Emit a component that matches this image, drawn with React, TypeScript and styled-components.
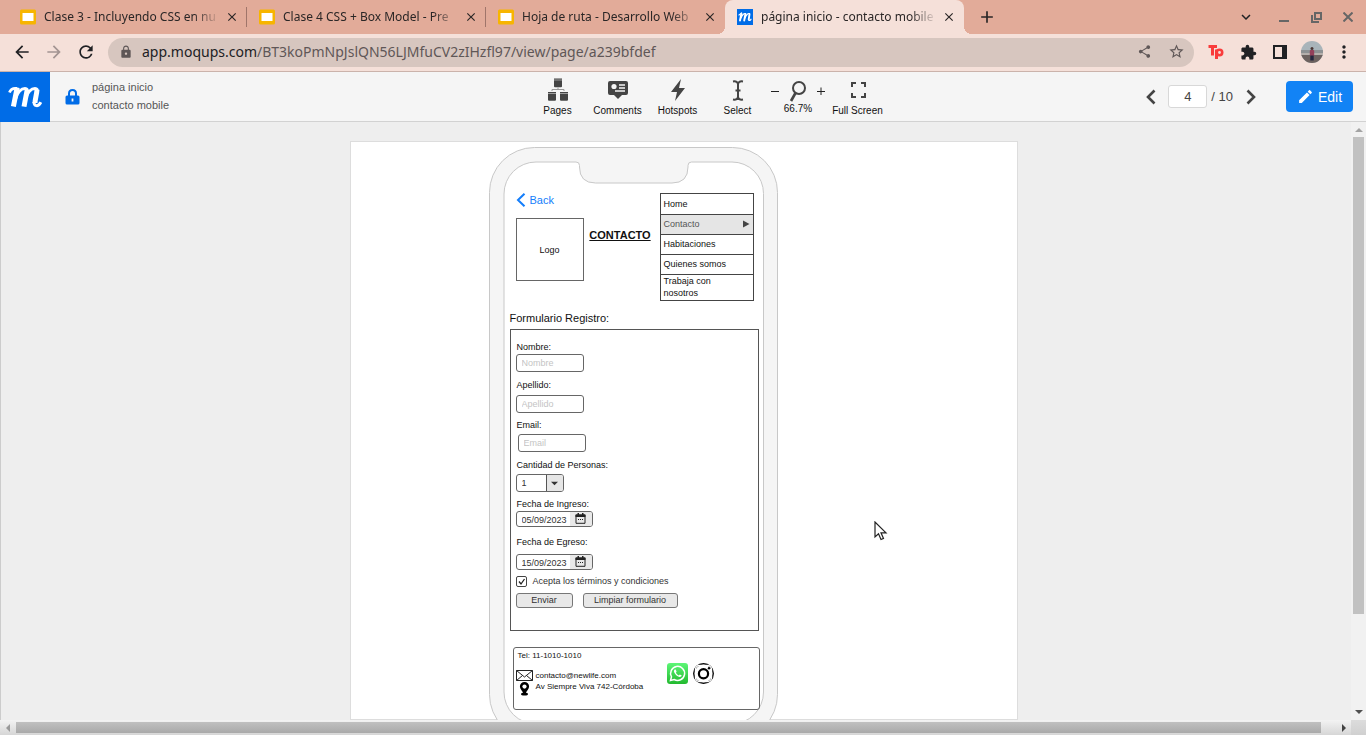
import React from "react";
import styled, { createGlobalStyle, css } from "styled-components";
import {
  MdAdd,
  MdArrowBack,
  MdArrowForward,
  MdClose,
  MdEdit,
  MdExtension,
  MdKeyboardArrowDown,
  MdLock,
  MdMoreVert,
  MdRefresh,
  MdShare,
  MdStarBorder,
} from "react-icons/md";

const GlobalStyle = createGlobalStyle`
  *, *::before, *::after { box-sizing: border-box; }
  body {
    margin: 0;
    overflow: hidden;
    font-family: "Liberation Sans", Arial, sans-serif;
    color: #222;
  }
  button, input, select { font: inherit; color: inherit; margin: 0; }
  svg { display: block; flex: none; }
`;

const Shell = styled.div`
  display: flex;
  flex-direction: column;
  height: 100vh;
`;

const plainButton = css`
  display: flex;
  align-items: center;
  justify-content: center;
  padding: 0;
  border: 0;
  background: none;
`;

/* ---------- Browser tabs ---------- */

const TabStrip = styled.div`
  display: flex;
  flex: none;
  height: 34px;
  padding-left: 8px;
  background: #e2ab99;
  font-family: "Noto Sans", sans-serif;
  color: #2a2626;
`;

const Tab = styled.div<{ $active?: boolean; $divider?: boolean }>`
  position: relative;
  display: flex;
  align-items: center;
  width: 239px;
  padding: 0 7px 0 12px;
  border-radius: 8px 8px 0 0;
  background: ${(p) => (p.$active ? "#f5e0d9" : "transparent")};

  ${(p) =>
    p.$divider &&
    css`
      &::after {
        content: "";
        position: absolute;
        right: 0;
        top: 7px;
        width: 1px;
        height: 20px;
        background: #a0756a;
      }
    `}

  ${(p) =>
    p.$active &&
    css`
      &::before,
      &::after {
        content: "";
        position: absolute;
        bottom: 0;
        width: 8px;
        height: 8px;
      }
      &::before {
        right: 100%;
        background: radial-gradient(circle at 0 0, transparent 8px, #f5e0d9 8px);
      }
      &::after {
        left: 100%;
        background: radial-gradient(circle at 100% 0, transparent 8px, #f5e0d9 8px);
      }
    `}
`;

const TabTitle = styled.span`
  flex: 1;
  min-width: 0;
  margin: 0 4px 0 8px;
  white-space: nowrap;
  font-size: 12px;
  line-height: 20px;
  mask-image: linear-gradient(to right, #000 85%, transparent 100%);
`;

const TabClose = styled.button`
  ${plainButton}
  width: 16px;
  height: 16px;
  stroke: currentColor;
`;

const NewTab = styled.button`
  ${plainButton}
  width: 28px;
  margin-left: 9px;
`;

const WindowControls = styled.div`
  display: flex;
  align-items: center;
  margin-left: auto;
  padding-right: 2px;
  color: #666;
`;

const WindowButton = styled.button<{ $width: number }>`
  ${plainButton}
  width: ${(p) => p.$width}px;
  height: 34px;
`;

/* ---------- Browser toolbar ---------- */

const Toolbar = styled.div`
  display: flex;
  flex: none;
  align-items: center;
  height: 38px;
  padding: 0 6px;
  border-bottom: 1px solid #cbb3ab;
  background: #f5e0d9;
  color: #202124;
`;

const ToolButton = styled.button<{ $color?: string }>`
  ${plainButton}
  width: 32px;
  height: 29px;
  padding-bottom: 1px;
  color: ${(p) => p.$color ?? "#202124"};
`;

const AddressBar = styled.div`
  display: flex;
  flex: 1;
  align-items: center;
  height: 29px;
  margin: 0 6px;
  padding: 0 2px 1px 11px;
  border-radius: 15px;
  background: #d7c6bf;
  color: #5f5757;
`;

const Url = styled.span`
  flex: 1;
  margin-left: 9px;
  font-family: "Noto Sans", sans-serif;
  font-size: 14px;
  line-height: 20px;
  white-space: nowrap;

  b {
    font-weight: 400;
    color: #202124;
  }
`;

/* ---------- Application header ---------- */

const AppHeader = styled.header`
  display: grid;
  flex: none;
  grid-template-columns: 50px 1fr 360px 1fr;
  grid-template-rows: 49px;
  height: 50px;
  border-bottom: 1px solid #d2d2d2;
  background: #f5f5f5;
`;

const LogoLink = styled.a`
  display: grid;
  place-items: center;
  height: 50px;
  background: #006ce7;
`;

const Project = styled.div`
  display: flex;
  align-items: center;
  gap: 12px;
  padding-left: 15px;
`;

const ProjectNames = styled.div`
  padding-bottom: 1px;
  font-size: 11px;
  line-height: 18px;
  color: #555;
`;

const Tools = styled.nav`
  display: grid;
  grid-template-columns: repeat(6, 60px);
`;

const toolText = css`
  font-size: 10px;
  line-height: 12px;
  color: #111;
  white-space: nowrap;
`;

const Tool = styled.button`
  ${plainButton}
  ${toolText}
  flex-direction: column;
  justify-content: flex-start;
  gap: 3px;
  padding: 6px 1px 0 0;
  svg { color: #444; }
`;

const ZoomTool = styled.div`
  ${toolText}
  display: grid;
  grid-template-columns: 14px 32px 14px;
  grid-template-rows: 25px 12px;
  align-content: start;
  justify-items: center;
  align-items: center;
  padding: 6px 1px 0 0;

  output { grid-column: 1 / -1; }
`;

const ZoomButton = styled.button`
  ${plainButton}
  width: 14px;
  height: 14px;
`;

const HeaderRight = styled.div`
  display: flex;
  align-items: center;
  justify-content: flex-end;
  padding-right: 13px;
  font-size: 13px;
  color: #444;
`;

const PageInput = styled.input`
  width: 39px;
  height: 23px;
  margin: 0 4px 0 7px;
  padding: 0;
  border: 1px solid #d8d8d8;
  border-radius: 3px;
  background: #fff;
  text-align: center;
`;

const StepButton = styled.button`
  ${plainButton}
  width: 20px;
  height: 24px;
`;

const NextButton = styled(StepButton)`
  margin: 0 25px 0 8px;
`;

const EditButton = styled.button`
  ${plainButton}
  gap: 4px;
  width: 67px;
  height: 31px;
  border-radius: 4px;
  background: #1283f5;
  color: #fff;
  font-size: 14px;
`;

/* ---------- Workspace and scroll bars ---------- */

const Workspace = styled.div`
  display: grid;
  flex: 1;
  grid-template-columns: 1fr 15px;
  grid-template-rows: minmax(0, 1fr) 15px;
  min-height: 0;
`;

const Canvas = styled.main`
  overflow: hidden;
  padding: 19px 0 0 15px;
  border-left: 1px solid #ccc;
  background: #eee;
`;

const Sheet = styled.div`
  width: 668px;
  min-height: 100%;
  margin: 0 auto;
  padding: 4px 0 0 138px;
  border: 1px solid #ddd;
  background: #fff;
`;

const VerticalBar = styled.div`
  display: flex;
  flex-direction: column;
  align-items: center;
  justify-content: space-between;
  padding-bottom: 4px;
  background: #f1f1f1;
`;

const VerticalThumb = styled.div`
  flex: none;
  width: 11px;
  height: calc(100% - 117px);
  margin-bottom: auto;
  background: #c1c1c1;
`;

const ArrowSlot = styled.div`
  display: grid;
  place-items: center;
  width: 15px;
  height: 15px;
`;

const HorizontalBar = styled.div`
  display: flex;
  align-items: center;
  background: linear-gradient(#f3f3f3, #d6d6d6);
`;

const HorizontalThumb = styled.div`
  flex: 1;
  height: 11px;
  margin: 0 15px 0 1px;
  background: linear-gradient(#c0c0c0, #a9a9a9);
`;

const BarCorner = styled.div`
  background: linear-gradient(#dcdcdc, #d0d0d0);
`;

const Pointer = styled.svg`
  position: fixed;
  left: 874px;
  top: 521px;
`;

/* ---------- Phone mock-up ---------- */

const Phone = styled.div`
  position: relative;
  width: 290px;
  padding: 47px 20px 0 21px;
  color: #111;
  font-size: 9px;
  line-height: 12px;
`;

const PhoneFrame = styled.svg`
  position: absolute;
  left: 0;
  top: 0;
`;

const Screen = styled.div`
  position: relative;
  display: flex;
  flex-direction: column;
`;

const ScreenHeader = styled.div`
  display: grid;
  grid-template-columns: 68px 1fr 94px;
  align-items: start;
  padding: 0 5px 0 6px;
`;

const BackLink = styled.a`
  display: flex;
  align-items: center;
  gap: 4px;
  height: 14px;
  margin-bottom: 11px;
  color: #147efb;
  font-size: 11px;
  text-decoration: none;
`;

const LogoBox = styled.div`
  display: grid;
  place-items: center;
  height: 63px;
  border: 1px solid #666;
`;

const ScreenTitle = styled.h1`
  margin: 35px 3px 0 0;
  font-size: 11px;
  line-height: 14px;
  text-align: center;
  text-decoration: underline;
  text-underline-offset: 1px;
`;

const Menu = styled.ul`
  margin: 0;
  padding: 0;
  border: 1px solid #444;
  list-style: none;
`;

const MenuItem = styled.li<{ $active?: boolean }>`
  display: flex;
  align-items: center;
  height: 20px;
  padding: 0 3px 1px 3px;
  background: ${(p) => (p.$active ? "#e5e5e5" : "transparent")};

  & + & { border-top: 1px solid #444; }

  a {
    flex: 1;
    color: ${(p) => (p.$active ? "#555" : "#111")};
    text-decoration: none;
  }

  &:last-child {
    height: 26px;
    padding-right: 24px;
  }
`;

const FormTitle = styled.h2`
  margin: 10px 0 4px;
  font-size: 11px;
  font-weight: 400;
  line-height: 14px;
`;

const Form = styled.form`
  height: 302px;
  padding: 11px 6px 0 5px;
  border: 1px solid #555;
`;

const Field = styled.div<{ $before?: number; $gap: number }>`
  display: flex;
  flex-direction: column;
  align-items: flex-start;
  gap: ${(p) => p.$gap}px;
  margin-top: ${(p) => p.$before ?? 0}px;

  label { padding-left: 1px; }
`;

const control = css`
  border: 1px solid #666;
  border-radius: 3px;
  background: #fff;
`;

const TextInput = styled.input<{ $indent?: boolean }>`
  ${control}
  width: 68px;
  height: 18px;
  margin-left: ${(p) => (p.$indent ? 2 : 0)}px;
  padding: 0 5px;

  &::placeholder { color: #c4c4c4; opacity: 1; }
`;

const Combo = styled.div<{ $date?: boolean }>`
  ${control}
  display: flex;
  width: ${(p) => (p.$date ? 77 : 48)}px;
  height: ${(p) => (p.$date ? 16 : 18)}px;
  overflow: hidden;
  color: #333;

  input,
  select {
    flex: 1;
    min-width: 0;
    width: 0;
    padding: ${(p) => (p.$date ? "2px 0 0 5px" : "0 0 0 5px")};
    border: 0;
    appearance: none;
    background: none;
  }
`;

const ComboEnd = styled.span`
  display: grid;
  place-items: center;
  width: 17px;
  border-left: 1px solid #555;
  background: #e6e6e6;
`;

const CalendarButton = styled.button`
  ${plainButton}
  justify-content: flex-start;
  width: 22px;
  padding: 0 0 1px 5px;
  background: #e9e9e9;
  color: #222;
`;

const Terms = styled.label`
  display: flex;
  align-items: center;
  gap: 6px;
  margin-top: 5px;
  color: #333;
`;

const TickBox = styled.span`
  position: relative;
  width: 11px;
  height: 11px;

  input {
    display: block;
    width: 11px;
    height: 11px;
    border: 1px solid #444;
    border-radius: 2px;
    appearance: none;
    background: #fff;
  }

  svg {
    position: absolute;
    inset: 0;
    pointer-events: none;
  }
`;

const Actions = styled.div`
  display: flex;
  gap: 10px;
  margin-top: 6px;
`;

const ActionButton = styled.button<{ $width: number }>`
  ${plainButton}
  width: ${(p) => p.$width}px;
  height: 15px;
  padding-bottom: 1px;
  border: 1px solid #777;
  border-radius: 3px;
  background: #e8e8e8;
  color: #333;
`;

const ContactBox = styled.footer`
  display: flex;
  justify-content: space-between;
  width: 247px;
  height: 63px;
  margin: 16px 0 0 3px;
  padding: 2px 45px 0 2px;
  border: 1px solid #666;
  border-radius: 3px;
  font-size: 8px;
  line-height: 11px;
`;

const ContactList = styled.address`
  font-style: normal;
  white-space: nowrap;
`;

const Telephone = styled.p`
  margin: 0 0 9px 2px;
`;

const ContactRow = styled.div`
  display: grid;
  grid-template-columns: 17px auto;
  align-items: center;
  justify-items: start;
  column-gap: 3px;
`;

const PlaceRow = styled(ContactRow)`
  align-items: start;

  svg { margin: 1px 0 0 3px; }
`;

const Social = styled.div`
  display: flex;
  gap: 5px;
  margin-top: 13px;
`;

/* ---------- Drawings ---------- */

const SlidesIcon = () => (
  <svg width="16" height="16" viewBox="0 0 16 16">
    <rect y="0.5" width="16" height="15" rx="1.5" fill="#f7b500" />
    <rect x="2.5" y="4" width="11" height="8" fill="#fff" />
  </svg>
);

const ScriptM = () => (
  <svg width="34" height="24" viewBox="0 0 34 24">
    <g fill="none" stroke="#fff" strokeLinejoin="round">
      <path d="M1.500 7.500C2.500 4.300 5 3 9 3.400" strokeWidth="2.800" />
      <path d="M9.200 2.400L5.400 21.600M19.200 4.600L16 21.600M29 4.600C28.800 9 27 14 27 18" strokeWidth="5" />
      <path d="M7.500 14C9.500 7 13.500 3.400 17 3.400C19 3.400 19.500 4.500 19.200 7M17.500 14C19.500 7 23.500 3.400 27 3.400C29 3.400 29.500 4.500 29.200 7" strokeWidth="3" />
      <path d="M26 17C25.800 21.800 30.500 21.800 32.800 17.200" strokeWidth="3" />
    </g>
  </svg>
);

const MoqupsFavicon = () => (
  <svg width="16" height="16" viewBox="0 0 16 16">
    <rect width="16" height="16" fill="#006ce7" />
    <g fill="none" stroke="#fff" strokeLinecap="round">
      <path d="M4.400 4.500L3 11.500M8.400 5L7.200 11.500M12.500 5.200L11.700 10.500" strokeWidth="1.900" />
      <path d="M2 6L4.500 4.200M4 9C5 6 7 4 8.500 4.600M8 9C9 6 11 4 12.500 4.600M11.700 10.500C11.800 12 13.200 11.800 14 10.200" strokeWidth="1.200" />
    </g>
  </svg>
);

const RestoreIcon = () => (
  <svg width="11" height="11" viewBox="0 0 11 11" fill="none" stroke="#666" strokeWidth="2">
    <path d="M4 1H10V7H4Z" />
    <path d="M1 3V10H8" />
  </svg>
);

const TpIcon = () => (
  <svg width="18" height="16" viewBox="0 0 18 16" fill="none" stroke="#f93c3c" strokeWidth="3">
    <path d="M1.500 2.500H10M5.500 2.500V11.500" />
    <path d="M9.500 5.500V15" />
    <circle cx="12.500" cy="8.500" r="2.700" strokeWidth="2.600" />
  </svg>
);

const SidePanelIcon = () => (
  <svg width="14" height="14" viewBox="0 0 14 14">
    <path d="M0 0H14V14H0Z" fill="#202124" />
    <path d="M2 2H9V12H2Z" fill="#f5e0d9" />
  </svg>
);

const Avatar = () => (
  <svg width="22" height="22" viewBox="0 0 22 22">
    <defs>
      <clipPath id="avatar-clip">
        <circle cx="11" cy="11" r="11" />
      </clipPath>
    </defs>
    <g clipPath="url(#avatar-clip)">
      <rect width="22" height="22" fill="#a9b4ba" />
      <rect y="9" width="22" height="3" fill="#8d9193" />
      <rect y="12" width="22" height="3" fill="#b5afab" />
      <rect y="14" width="22" height="8" fill="#6d625f" />
      <circle cx="11" cy="7.500" r="1.500" fill="#4b3533" />
      <rect x="8.800" y="9" width="4.400" height="6" rx="1" fill="#93405a" />
      <rect x="9.300" y="14.500" width="3.400" height="5" fill="#26263f" />
    </g>
  </svg>
);

const ProjectLock = () => (
  <svg width="15" height="16" viewBox="0 0 15 16">
    <path d="M4 7V4.500C4 2.300 5.500 1 7.500 1S11 2.300 11 4.500V7" fill="none" stroke="#006ce7" strokeWidth="2" />
    <rect x="0.500" y="6.500" width="14" height="9" rx="1.500" fill="#006ce7" />
    <path d="M7.500 9.500V12.500" stroke="#f5f5f5" strokeWidth="1.800" />
  </svg>
);

const PagesIcon = () => (
  <svg width="24" height="24" viewBox="0 0 24 24" fill="currentColor">
    <path d="M8 0.500h8v1.200H8zM8 2.200h8v6a1 1 0 0 1-1 1H9a1 1 0 0 1-1-1z" />
    <path d="M2 14h8v1.200H2zM2 15.800h8v6a1 1 0 0 1-1 1H3a1 1 0 0 1-1-1zM14 14h8v1.200h-8zM14 15.800h8v6a1 1 0 0 1-1 1h-6a1 1 0 0 1-1-1z" />
    <path d="M6 13V11.500H18V13M12 11.500V9.500" fill="none" stroke="#999" />
  </svg>
);

const CommentsIcon = () => (
  <svg width="24" height="24" viewBox="0 0 24 24">
    <path d="M4 3H20Q22 3 22 5V15Q22 17 20 17H16L12 21L8 17H4Q2 17 2 15V5Q2 3 4 3Z" fill="currentColor" />
    <circle cx="8" cy="8.500" r="2.600" fill="#f5f5f5" />
    <path d="M13 7H19M13 10H19M9 13H19" stroke="#f5f5f5" strokeWidth="1.300" />
  </svg>
);

const HotspotsIcon = () => (
  <svg width="24" height="24" viewBox="0 0 24 24">
    <path d="M15 1L5 14H11L9 23L19 10H13Z" fill="currentColor" />
  </svg>
);

const SelectIcon = () => (
  <svg width="24" height="24" viewBox="0 0 24 24" fill="none" stroke="currentColor" strokeWidth="2">
    <path d="M7 3.500C10 3 12 4 12 6.500C12 4 14 3 17 3.500M12 6V19M7 21.500C10 22 12 21 12 18.500C12 21 14 22 17 21.500M9.500 12.500H14.500" />
  </svg>
);

const LoupeIcon = () => (
  <svg width="20" height="24" viewBox="0 0 20 24" fill="none" stroke="#444" strokeWidth="2">
    <circle cx="11" cy="9" r="6" />
    <path d="M7.500 14L3 22" strokeWidth="2.600" />
  </svg>
);

const FullScreenIcon = () => (
  <svg width="24" height="24" viewBox="0 0 24 24" fill="none" stroke="currentColor" strokeWidth="2">
    <path d="M6 9V5H10M15 5H19V9M19 15V19H15M10 19H6V15" />
  </svg>
);

const Chevron = ({ left }: { left?: boolean }) => (
  <svg width="10" height="16" viewBox="0 0 10 16" fill="none" stroke="#444" strokeWidth="2.600">
    <path d={left ? "M8.500 1.500L2 8L8.500 14.500" : "M1.500 1.500L8 8L1.500 14.500"} />
  </svg>
);

const CalendarIcon = () => (
  <svg width="11" height="11" viewBox="0 0 11 11">
    <path d="M1 2H10V10.300H1Z" fill="none" stroke="#222" />
    <path d="M0.500 1.500H10.500V4H0.500ZM2.500 0H4V2H2.500ZM7 0H8.500V2H7Z" fill="#222" />
    <path d="M3 6.500H4M5 6.500H6M7 6.500H8" stroke="#222" />
  </svg>
);

const EnvelopeIcon = () => (
  <svg width="17" height="11" viewBox="0 0 17 11" fill="none" stroke="#222">
    <path d="M0.500 0.500H16.500V10.500H0.500ZM0.500 0.500L8.500 7L16.500 0.500M0.500 10.500L6.500 5.500M16.500 10.500L10.500 5.500" />
  </svg>
);

const PinIcon = () => (
  <svg width="11" height="14" viewBox="0 0 11 14">
    <ellipse cx="5.500" cy="12" rx="3.500" ry="1.600" fill="#000" />
    <path d="M5.500 0A4.600 4.600 0 0 1 10.100 4.600C10.100 7 7.500 9 6.500 12H4.500C3.500 9 0.900 7 0.900 4.600A4.600 4.600 0 0 1 5.500 0Z" fill="#000" />
    <circle cx="5.500" cy="4.600" r="2.100" fill="#fff" />
  </svg>
);

const WhatsAppIcon = () => (
  <svg width="21" height="21" viewBox="0 0 21 21">
    <defs>
      <linearGradient id="whatsapp-fill" x1="0" y1="0" x2="0" y2="1">
        <stop offset="0" stopColor="#5df777" />
        <stop offset="1" stopColor="#22b92f" />
      </linearGradient>
    </defs>
    <rect width="21" height="21" rx="3" fill="url(#whatsapp-fill)" />
    <path d="M3.500 17.500L4.500 13.800A7 7 0 1 1 7.200 16.500Z" fill="none" stroke="#fff" strokeWidth="1.500" />
    <path d="M7.500 6.800C6.600 7.500 6.700 9 8.400 11.200C10.500 13.700 12.700 14.600 14 13.600C14.700 13 14.700 12.500 14.500 12.200L12.800 11.400L11.900 12.400C10.600 12 9.400 10.800 8.900 9.700L9.600 8.700L8.800 6.800C8.500 6.500 8 6.500 7.500 6.800Z" fill="#fff" />
  </svg>
);

const InstagramIcon = () => (
  <svg width="21" height="21" viewBox="0 0 21 21" fill="none" stroke="#000">
    <circle cx="10.500" cy="10.500" r="9.700" strokeWidth="1.500" />
    <rect x="2.500" y="2.500" width="16" height="16" rx="4" stroke="#fff" strokeWidth="1.500" />
    <circle cx="10.500" cy="10.800" r="4.600" strokeWidth="2.200" />
    <circle cx="16" cy="5.200" r="1.200" fill="#000" stroke="none" />
  </svg>
);

const Triangle = ({ d, color, size = 8 }: { d: string; color: string; size?: number }) => (
  <svg width={size} height={size} viewBox="0 0 8 8">
    <path d={d} fill={color} />
  </svg>
);

const arrows = {
  up: "M0 6L4 2L8 6Z",
  down: "M0 2L4 6L8 2Z",
  left: "M6 0L2 4L6 8Z",
  right: "M2 0L6 4L2 8Z",
};

/* ---------- Page ---------- */

const tabs = [
  { title: "Clase 3 - Incluyendo CSS en nu", divider: true },
  { title: "Clase 4 CSS + Box Model - Pre", divider: true },
  { title: "Hoja de ruta - Desarrollo Web" },
  { title: "página inicio - contacto mobile", active: true },
];

const menu = ["Home", "Contacto", "Habitaciones", "Quienes somos", "Trabaja con nosotros"];

const DateField = ({ id, label, value, before, gap }: { id: string; label: string; value: string; before: number; gap: number }) => (
  <Field $before={before} $gap={gap}>
    <label htmlFor={id}>{label}</label>
    <Combo $date>
      <input id={id} type="text" defaultValue={value} />
      <CalendarButton type="button" aria-label="Calendario">
        <CalendarIcon />
      </CalendarButton>
    </Combo>
  </Field>
);

export default function App() {
  return (
    <Shell>
      <GlobalStyle />
      <TabStrip>
        {tabs.map((tab) => (
          <Tab key={tab.title} $active={tab.active} $divider={tab.divider}>
            {tab.active ? <MoqupsFavicon /> : <SlidesIcon />}
            <TabTitle>{tab.title}</TabTitle>
            <TabClose aria-label="Close tab">
              <MdClose size={14} />
            </TabClose>
          </Tab>
        ))}
        <NewTab aria-label="New tab">
          <MdAdd size={20} />
        </NewTab>
        <WindowControls>
          <WindowButton $width={44} aria-label="Search tabs">
            <MdKeyboardArrowDown size={18} color="#202124" />
          </WindowButton>
          <WindowButton $width={32} aria-label="Minimize">
            <svg width="10" height="10" viewBox="0 0 10 10">
              <path d="M0 8H10V10H0Z" fill="#666" />
            </svg>
          </WindowButton>
          <WindowButton $width={32} aria-label="Restore">
            <RestoreIcon />
          </WindowButton>
          <WindowButton $width={32} aria-label="Close">
            <svg width="10" height="10" viewBox="0 0 10 10" stroke="#666" strokeWidth="2">
              <path d="M0.500 0.500L9.500 9.500M9.500 0.500L0.500 9.500" />
            </svg>
          </WindowButton>
        </WindowControls>
      </TabStrip>

      <Toolbar>
        <ToolButton aria-label="Back">
          <MdArrowBack size={20} />
        </ToolButton>
        <ToolButton aria-label="Forward" $color="#a39492">
          <MdArrowForward size={20} />
        </ToolButton>
        <ToolButton aria-label="Reload">
          <MdRefresh size={20} />
        </ToolButton>
        <AddressBar>
          <MdLock size={14} />
          <Url>
            <b>app.moqups.com</b>/BT3koPmNpJslQN56LJMfuCV2zIHzfl97/view/page/a239bfdef
          </Url>
          <ToolButton aria-label="Share" $color="#5f5757">
            <MdShare size={15} />
          </ToolButton>
          <ToolButton aria-label="Bookmark" $color="#5f5757">
            <MdStarBorder size={17} />
          </ToolButton>
        </AddressBar>
        <ToolButton aria-label="Extension">
          <TpIcon />
        </ToolButton>
        <ToolButton aria-label="Extensions">
          <MdExtension size={17} />
        </ToolButton>
        <ToolButton aria-label="Side panel">
          <SidePanelIcon />
        </ToolButton>
        <ToolButton aria-label="Profile">
          <Avatar />
        </ToolButton>
        <ToolButton aria-label="Menu">
          <MdMoreVert size={20} />
        </ToolButton>
      </Toolbar>

      <AppHeader>
        <LogoLink href="#" aria-label="Moqups">
          <ScriptM />
        </LogoLink>
        <Project>
          <ProjectLock />
          <ProjectNames>
            <div>página inicio</div>
            <div>contacto mobile</div>
          </ProjectNames>
        </Project>
        <Tools>
          <Tool>
            <PagesIcon />
            Pages
          </Tool>
          <Tool>
            <CommentsIcon />
            Comments
          </Tool>
          <Tool>
            <HotspotsIcon />
            Hotspots
          </Tool>
          <Tool>
            <SelectIcon />
            Select
          </Tool>
          <ZoomTool>
            <ZoomButton aria-label="Zoom out">
              <svg width="8" height="8" viewBox="0 0 8 8" stroke="#222">
                <path d="M0 4.500H8" />
              </svg>
            </ZoomButton>
            <LoupeIcon />
            <ZoomButton aria-label="Zoom in">
              <svg width="8" height="8" viewBox="0 0 8 8" stroke="#222">
                <path d="M0 4.500H8M4 0.500V8" />
              </svg>
            </ZoomButton>
            <output>66.7%</output>
          </ZoomTool>
          <Tool>
            <FullScreenIcon />
            Full Screen
          </Tool>
        </Tools>
        <HeaderRight>
          <StepButton aria-label="Previous page">
            <Chevron left />
          </StepButton>
          <PageInput aria-label="Page" defaultValue="4" />
          <span>/ 10</span>
          <NextButton aria-label="Next page">
            <Chevron />
          </NextButton>
          <EditButton>
            <MdEdit size={17} />
            Edit
          </EditButton>
        </HeaderRight>
      </AppHeader>

      <Workspace>
        <Canvas>
          <Sheet>
            <Phone>
              <PhoneFrame width="290" height="595" viewBox="0 0 290 595" stroke="#c8c8c8">
                <rect x="0.500" y="1.500" width="288" height="592" rx="45" fill="#f5f5f5" />
                <path
                  d="M47 16H87Q90.500 16 90.500 19.500V21Q90.500 37 106.500 37H183Q199 37 199 21V19.500Q199 16 202.500 16H243A31.500 31.500 0 0 1 274.500 47.500V546A32 32 0 0 1 242.500 578H47A32 32 0 0 1 15 546V48A32 32 0 0 1 47 16Z"
                  fill="#fff"
                />
              </PhoneFrame>
              <Screen>
                <ScreenHeader>
                  <div>
                    <BackLink href="#">
                      <svg width="10" height="14" viewBox="0 0 10 14" fill="none" stroke="#147efb" strokeWidth="2">
                        <path d="M8.500 0.700L2 7L8.500 13.300" />
                      </svg>
                      Back
                    </BackLink>
                    <LogoBox>Logo</LogoBox>
                  </div>
                  <ScreenTitle>CONTACTO</ScreenTitle>
                  <Menu>
                    {menu.map((item) => (
                      <MenuItem key={item} $active={item === "Contacto"}>
                        <a href="#">{item}</a>
                        {item === "Contacto" && <Triangle d="M1 0.500L7.500 4L1 7.500Z" color="#444" />}
                      </MenuItem>
                    ))}
                  </Menu>
                </ScreenHeader>

                <FormTitle>Formulario Registro:</FormTitle>
                <Form onSubmit={(e: React.FormEvent) => e.preventDefault()}>
                  <Field $gap={1}>
                    <label htmlFor="nombre">Nombre:</label>
                    <TextInput id="nombre" placeholder="Nombre" />
                  </Field>
                  <Field $before={7} $gap={4}>
                    <label htmlFor="apellido">Apellido:</label>
                    <TextInput id="apellido" placeholder="Apellido" />
                  </Field>
                  <Field $before={6} $gap={3}>
                    <label htmlFor="email">Email:</label>
                    <TextInput id="email" placeholder="Email" $indent />
                  </Field>
                  <Field $before={7} $gap={3}>
                    <label htmlFor="personas">Cantidad de Personas:</label>
                    <Combo>
                      <select id="personas" defaultValue="1">
                        <option>1</option>
                      </select>
                      <ComboEnd>
                        <Triangle d={arrows.down} color="#333" size={7} />
                      </ComboEnd>
                    </Combo>
                  </Field>
                  <DateField id="ingreso" label="Fecha de Ingreso:" value="05/09/2023" before={6} gap={1} />
                  <DateField id="egreso" label="Fecha de Egreso:" value="15/09/2023" before={9} gap={6} />
                  <Terms>
                    <TickBox>
                      <input type="checkbox" defaultChecked />
                      <svg width="11" height="11" viewBox="0 0 11 11" fill="none" stroke="#222" strokeWidth="1.300">
                        <path d="M3 5.500L5 8L8.500 3" />
                      </svg>
                    </TickBox>
                    Acepta los términos y condiciones
                  </Terms>
                  <Actions>
                    <ActionButton $width={57} type="submit">
                      Enviar
                    </ActionButton>
                    <ActionButton $width={95} type="reset">
                      Limpiar formulario
                    </ActionButton>
                  </Actions>
                </Form>

                <ContactBox>
                  <ContactList>
                    <Telephone>Tel: 11-1010-1010</Telephone>
                    <ContactRow>
                      <EnvelopeIcon />
                      contacto@newlife.com
                    </ContactRow>
                    <PlaceRow>
                      <PinIcon />
                      Av Siempre Viva 742-Córdoba
                    </PlaceRow>
                  </ContactList>
                  <Social>
                    <WhatsAppIcon />
                    <InstagramIcon />
                  </Social>
                </ContactBox>
              </Screen>
            </Phone>
          </Sheet>
        </Canvas>
        <VerticalBar>
          <ArrowSlot>
            <Triangle d={arrows.up} color="#a3a3a3" />
          </ArrowSlot>
          <VerticalThumb />
          <Triangle d={arrows.down} color="#505050" />
        </VerticalBar>
        <HorizontalBar>
          <ArrowSlot>
            <Triangle d={arrows.left} color="#999" />
          </ArrowSlot>
          <HorizontalThumb />
          <ArrowSlot>
            <Triangle d={arrows.right} color="#444" />
          </ArrowSlot>
        </HorizontalBar>
        <BarCorner />
      </Workspace>

      <Pointer width="14" height="20" viewBox="0 0 14 20">
        <path d="M1 1V16L4.500 12.800L7 18.500L9.500 17.400L7 11.800H12Z" fill="#fff" stroke="#222" strokeWidth="1.200" />
      </Pointer>
    </Shell>
  );
}
